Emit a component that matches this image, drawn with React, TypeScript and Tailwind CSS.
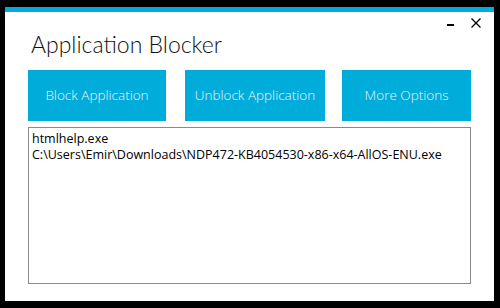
import React from "react";

export default function App() {
  const font = { fontFamily: '"Open Sans", "Noto Sans", sans-serif' };
  return (
    <div className="w-[500px] h-[308px] bg-black pl-[5px] pt-[7px]" style={font}>
      <div className="w-[489px] h-[294px] bg-white flex flex-col">
        <div className="h-[5px] bg-[#00acd9] w-[489px]" />
        <div className="relative h-[17px]">
          <div className="absolute left-[442px] top-[12px] w-[7px] h-[2px] bg-black" />
          <svg className="absolute left-[466px] top-[6px]" width="10" height="10" viewBox="0 0 10 10">
            <path d="M0.5 0.5 L9.5 9.5 M9.5 0.5 L0.5 9.5" stroke="#000" strokeWidth="1.3" />
          </svg>
        </div>
        <div
          className="pl-[26px] pt-[1px] h-[41px] text-[23px] font-light leading-[28px] text-[#111]"
          style={{ fontFamily: 'Lato, "Open Sans", sans-serif' }}
        >
          Application Blocker
        </div>
        <div className="flex pl-[23px]">
          <div className="w-[138px] h-[51px] bg-[#00acd9] text-[#e6f6fb] text-[13.5px] font-light flex items-center justify-center">
            Block Application
          </div>
          <div className="ml-[19px] w-[140px] h-[51px] bg-[#00acd9] text-[#e6f6fb] text-[13.5px] font-light flex items-center justify-center">
            Unblock Application
          </div>
          <div className="ml-[17px] w-[129px] h-[51px] bg-[#00acd9] text-[#e6f6fb] text-[13.5px] font-light flex items-center justify-center">
            More Options
          </div>
        </div>
        <div className="ml-[23px] mt-[6px] w-[443px] h-[157px] border border-[#8a8a8a] px-[3px] pt-[3px] text-[12.5px] leading-[16px] text-black">
          <div>htmlhelp.exe</div>
          <div>C:\Users\Emir\Downloads\NDP472-KB4054530-x86-x64-AllOS-ENU.exe</div>
        </div>
      </div>
    </div>
  );
}
